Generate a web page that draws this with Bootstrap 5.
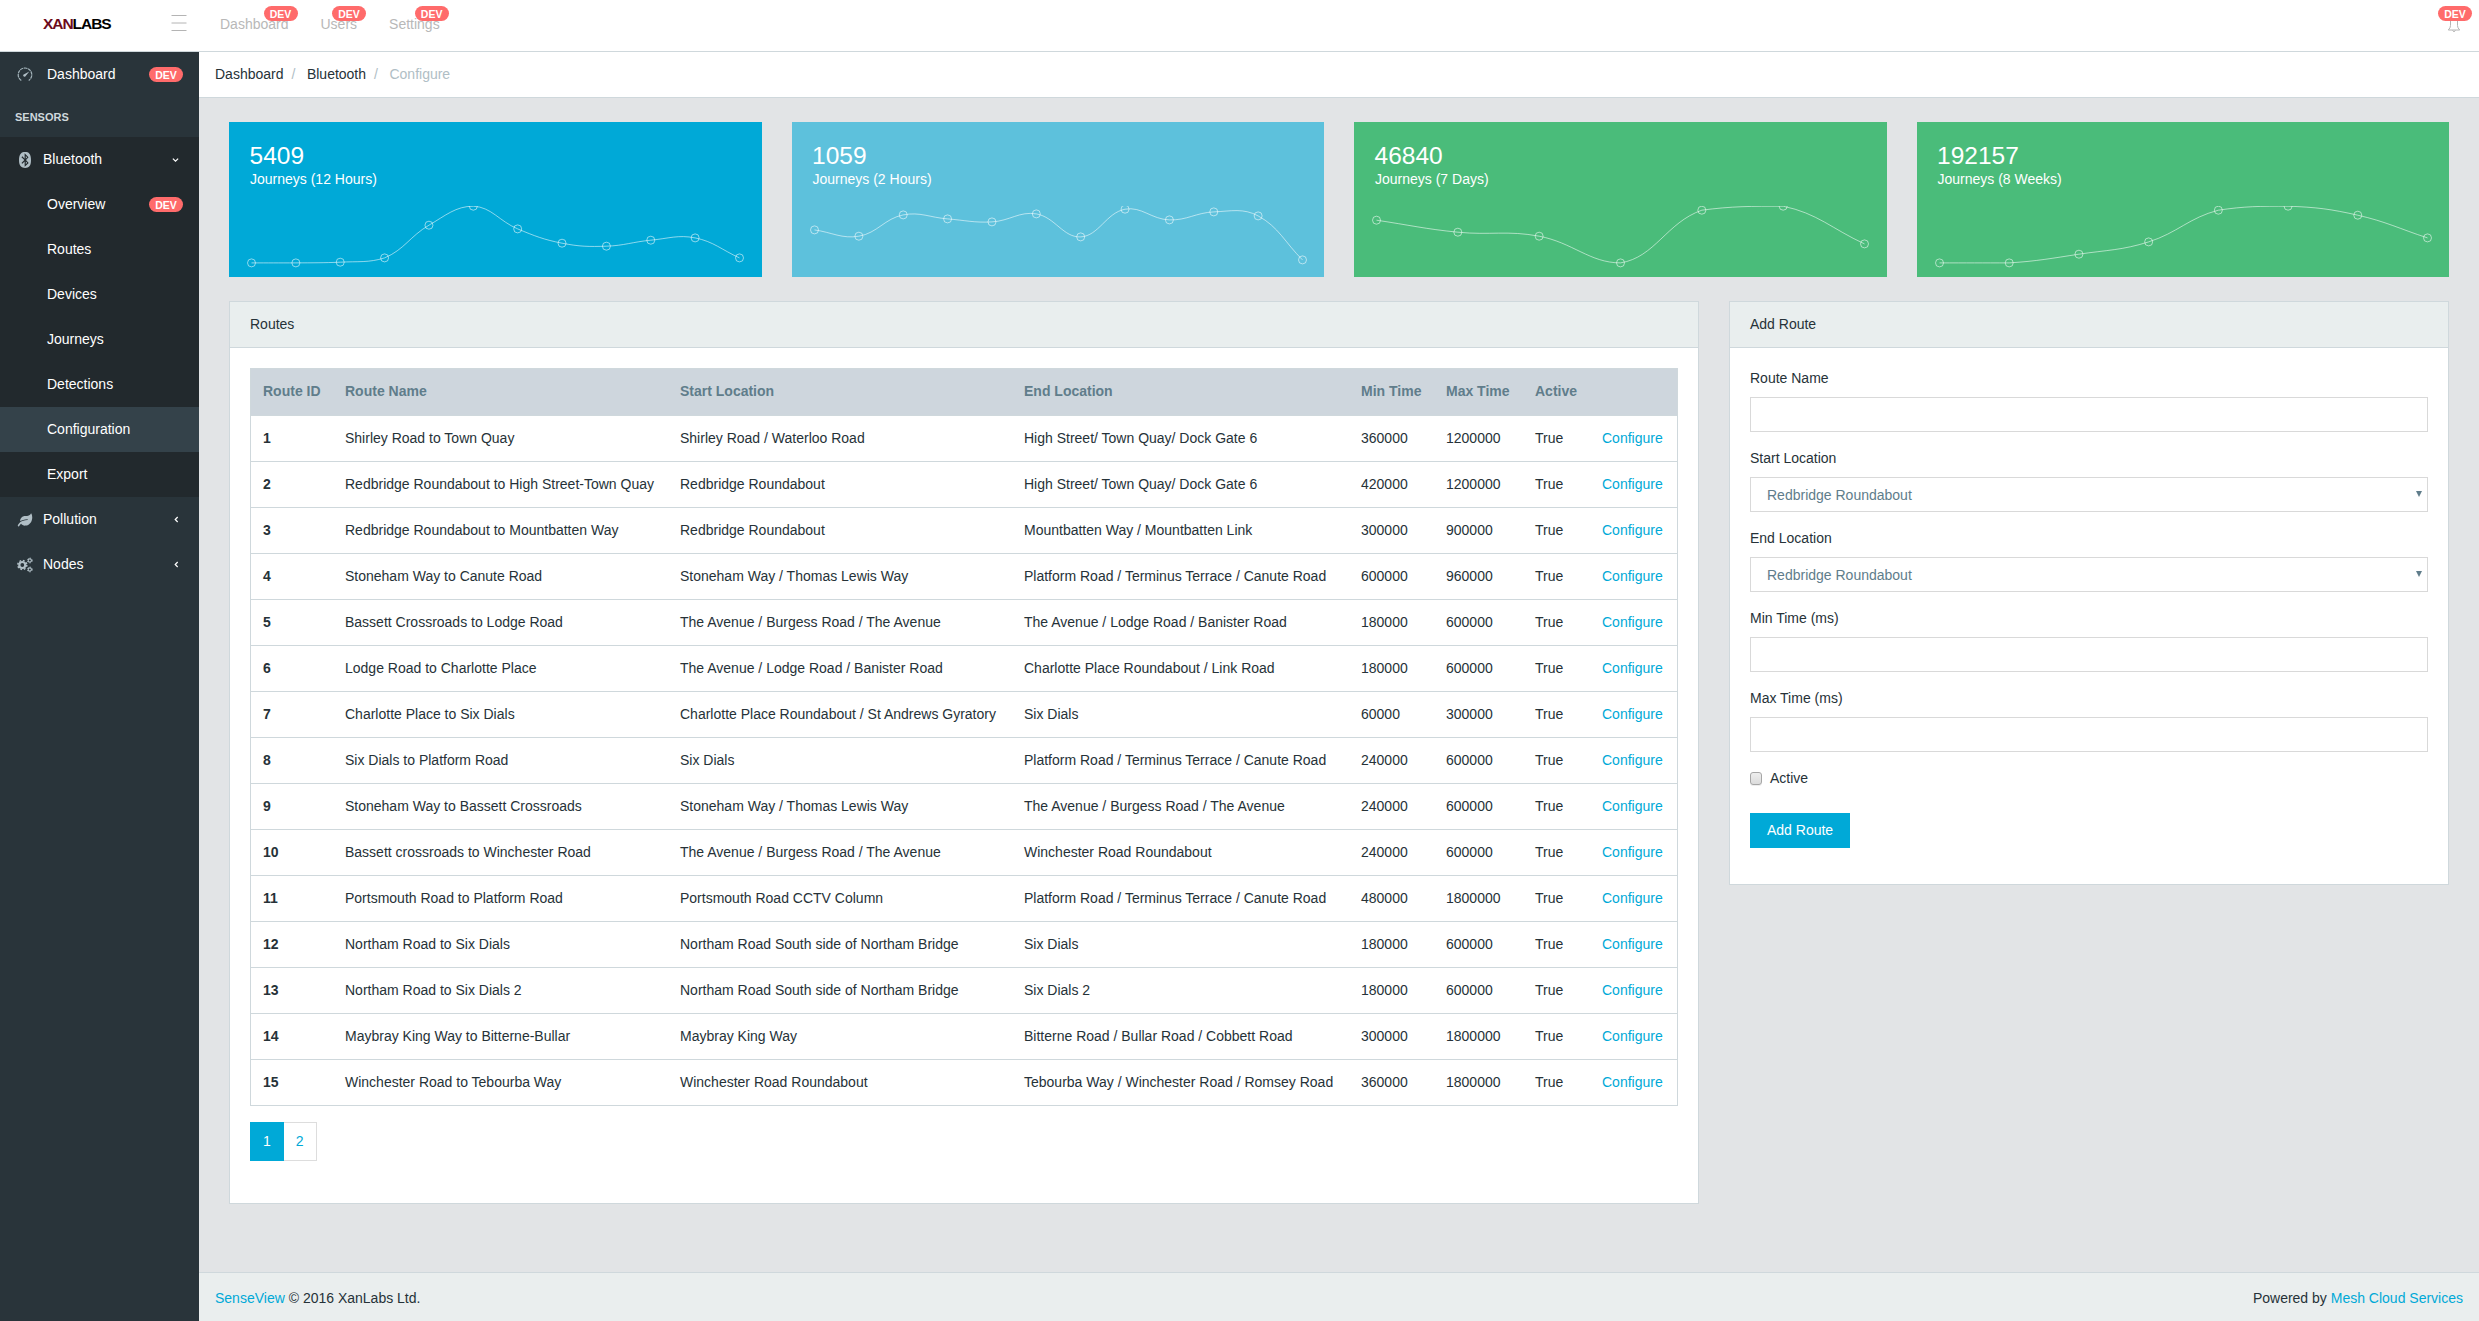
<!DOCTYPE html>
<html lang="en">
<head>
<meta charset="utf-8">
<meta name="viewport" content="width=device-width, initial-scale=1">
<title>SenseView - Configure</title>
<link href="https://cdn.jsdelivr.net/npm/bootstrap@5.3.0/dist/css/bootstrap.min.css" rel="stylesheet">
<style>
:root{--line:#cfd8dc;--brand:#00a9d7;--ink:#263238;--muted:#607d8b}
body{font:14px/1.5 "Liberation Sans",Arial,sans-serif;color:var(--ink);background:#e2e4e6}
a{color:var(--brand);text-decoration:none}
/* top bar */
.topbar{height:52px;background:#fff;border-bottom:1px solid var(--line)}
.brand-logo{width:155px;font-weight:700;font-size:15.5px;letter-spacing:-1.05px;color:#000;line-height:1;padding:16px 0 0 43px}
.brand-logo span{color:#6d0a1c}
.burger{width:16px;margin:15px 0 0 16px}
.top-links{gap:32px;margin:14px 0 0 33px}
.top-links a{color:#b8b8b8;position:relative}
.dev{background:#ff6b6b;font-size:10.5px;font-weight:700;height:15px;width:34px;padding:2.5px 0 0;line-height:11px;text-align:center;flex:none}
.top-links .dev{position:absolute;top:-8px;right:-9px}
.bell{position:relative;width:14px;height:16px;margin:17px 18px 0 0}
.bell svg{display:block}
.bell .dev{position:absolute;top:-11px;left:-9px}
/* sidebar */
.side{width:199px;background:#29343a;flex:none}
.side a{color:#fff;height:45px;padding:0 16px 0 47px}
.side .nav-icon{width:16px;height:16px;margin-left:-30px;margin-right:10px;fill:#b0bec5;flex:none}
.side .wide{padding-left:47px}
.side .wide .nav-icon{margin-right:14px;margin-top:-2px}
.side .chev{width:7px;height:7px;margin-right:4px;fill:none;stroke:#fff;stroke-width:1.4}
.side-title{height:40px;padding:12px 15px 0;font-size:11px;font-weight:700;color:#cfd8dc}
.side-open{background:#22292d}
.side a.now{background:#34424a}
/* page */
.crumbs{background:#fff;border-bottom:1px solid var(--line);padding:12px 16px;--bs-breadcrumb-divider-color:#b0bec5;--bs-breadcrumb-item-padding-x:8px;--bs-breadcrumb-item-active-color:#b0bec5}
.crumbs a{color:var(--ink)}
.crumbs .breadcrumb-item+.breadcrumb-item{padding-left:8px}
.crumbs .breadcrumb-item+.breadcrumb-item::before{padding-right:11.5px}
.page{padding:24px 30px 0}
.page .row{--bs-gutter-x:30px;margin-bottom:24px}
.tile,.panel{border-radius:0}
.tile{height:155px;color:#fff;border:0;padding:21px 0 0}
.tile h4{font-size:24.5px;line-height:26px;margin:0 20.5px;font-weight:400}
.tile p{margin:0 21px 16px}
.tile svg{display:block;width:100%;height:70px;overflow:hidden;fill:none;stroke:rgba(255,255,255,.55);stroke-width:1}
.c-blue{background:var(--brand)}.c-sky{background:#5dc1dc}.c-green{background:#4abc7a}
.panel{border:1px solid var(--line);color:inherit;--bs-card-inner-border-radius:0}
.panel .card-header{background:#e9eeee;border-bottom:1px solid var(--line);padding:12px 20px;border-radius:0}
.panel .card-body{padding:20px}
.routes{--bs-table-color:#263238;table-layout:fixed;border:1px solid var(--line);margin-bottom:16px;white-space:nowrap}
.routes th,.routes td{padding:12px 0 12px 12px;border-bottom:1px solid var(--line)}
.routes thead th{background:#ced6dd;color:var(--muted);padding-bottom:13px}
.pager{margin-bottom:22px;--bs-pagination-padding-x:12px;--bs-pagination-padding-y:8px;--bs-pagination-font-size:14px;--bs-pagination-border-radius:0;--bs-pagination-color:var(--brand);--bs-pagination-border-color:#ddd;--bs-pagination-active-bg:var(--brand);--bs-pagination-active-border-color:var(--brand)}
.form-label{margin-bottom:8px;display:block}
.field{margin-bottom:16px}
.field .form-control,.field .form-select{height:35px;border:1px solid #d9d9d9;border-radius:0;font-size:14px;color:var(--muted);padding:7px 16px 5px}
.field .form-select{background-image:url("data:image/svg+xml,%3Csvg xmlns='http://www.w3.org/2000/svg' viewBox='0 0 6 6'%3E%3Cpath fill='%23607d8b' d='M0 0h6L3 6z'/%3E%3C/svg%3E");background-size:6px 6px;background-position:right 5px top 13px}
.tick{appearance:none;width:12px;height:13px;margin:0 8px 0 0;border:1px solid #a6a6a6;border-radius:3px;background:linear-gradient(#eee,#dcdcdc);box-shadow:0 1px 0 #eee}
.btn-add{--bs-btn-color:#fff;--bs-btn-bg:var(--brand);--bs-btn-border-color:var(--brand);--bs-btn-border-radius:0;--bs-btn-font-size:14px;--bs-btn-padding-x:16px;--bs-btn-padding-y:6px;height:35px;margin-top:24px}
.foot{height:49px;background:#eaeeee;border-top:1px solid var(--line);padding:15px 16px 0}
</style>
<script src="https://cdn.jsdelivr.net/npm/bootstrap@5.3.0/dist/js/bootstrap.bundle.min.js"></script>
</head>
<body>
<div class="d-flex flex-column min-vh-100">
<header class="topbar d-flex align-items-start">
  <div class="brand-logo"><span>XAN</span>LABS</div>
  <svg class="burger" height="16" viewBox="0 0 16 16" stroke="#b4b4b4" stroke-width="1"><path d="M.5 .5h15M.5 8h15M.5 15.500h15"/></svg>
  <nav class="top-links d-flex">
    <a href="#">Dashboard<span class="badge rounded-pill dev">DEV</span></a>
    <a href="#">Users<span class="badge rounded-pill dev">DEV</span></a>
    <a href="#">Settings<span class="badge rounded-pill dev">DEV</span></a>
  </nav>
  <div class="bell ms-auto">
    <svg width="14" height="16" viewBox="0 0 14 16" fill="none" stroke="#b4b4b4" stroke-width="1"><path d="M3.500 3v5.500Q3.500 11 1.300 13h11.400Q10.500 11 10.500 8.500V3M5.500 13.500q1.500 2.500 3 0"/></svg>
    <span class="badge rounded-pill dev">DEV</span>
  </div>
</header>
<div class="d-flex flex-grow-1">
  <aside class="side">
    <nav class="d-flex flex-column">
      <a href="#" class="wide d-flex align-items-center"><svg class="nav-icon" viewBox="0 0 16 16"><path d="M4.300 14.500A6.800 6.800 0 1 1 11.700 14.500" fill="none" stroke="#a3b3ba" stroke-width="1.200" stroke-dasharray="3.400 .6"/><path d="M12.300 5.600 8.700 9.900A1.300 1.300 0 1 1 7.200 8.200z"/></svg>Dashboard<span class="badge rounded-pill dev ms-auto">DEV</span></a>
      <div class="side-title">SENSORS</div>
      <div class="side-open">
        <a href="#" class="d-flex align-items-center"><svg class="nav-icon" viewBox="-32 0 512 512"><path d="M292.600 171.100L249.700 214l-.3-86 43.200 43.100m-43.200 219.800l43.100-43.100-42.900-42.900-.2 86zM416 259.400C416 465 344.100 512 230.900 512S32 465 32 259.400 115.400 0 228.600 0 416 53.900 416 259.400zm-158.500 0l79.400-88.600L211.800 36.500v176.900L138 139.600l-27 26.900 92.700 93-92.700 93 26.900 26.900 73.800-73.800 2.300 170 127.400-127.500-83.900-88.700z"/></svg>Bluetooth<svg class="chev ms-auto" viewBox="0 0 8 8"><path d="M1 3l3 3 3-3"/></svg></a>
        <a href="#" class="d-flex align-items-center">Overview<span class="badge rounded-pill dev ms-auto">DEV</span></a>
        <a href="#" class="d-flex align-items-center">Routes</a>
        <a href="#" class="d-flex align-items-center">Devices</a>
        <a href="#" class="d-flex align-items-center">Journeys</a>
        <a href="#" class="d-flex align-items-center">Detections</a>
        <a href="#" class="d-flex align-items-center now">Configuration</a>
        <a href="#" class="d-flex align-items-center">Export</a>
      </div>
      <a href="#" class="d-flex align-items-center"><svg class="nav-icon" viewBox="-30 -20 636 552"><path d="M546.200 9.700c-5.600-12.500-21.600-13-28.300-1.200C486.900 62.400 431.400 96 368 96h-80C182 96 96 182 96 288c0 7 .8 13.700 1.500 20.500C161.300 262.800 253.400 224 384 224c8.800 0 16 7.200 16 16s-7.200 16-16 16C132.600 256 26 410.100 2.400 468c-6.600 16.300 1.200 34.900 17.500 41.600 16.400 6.800 35-1.100 41.800-17.300 1.500-3.600 20.900-47.900 71.900-90.600 32.400 43.900 94 85.800 174.900 77.200C465.500 467.500 576 326.700 576 154.300c0-50.200-10.800-102.200-29.800-144.600z"/></svg>Pollution<svg class="chev ms-auto" viewBox="0 0 8 8"><path d="M6.500 1.200 3.700 4l2.800 2.800"/></svg></a>
      <a href="#" class="d-flex align-items-center"><svg class="nav-icon" viewBox="0 0 16 16"><g fill="none" stroke="#b0bec5"><circle cx="5.300" cy="8" r="3" stroke-width="2.200"/><circle cx="5.300" cy="8" r="4.500" stroke-width="1.500" stroke-dasharray="1.770 1.770"/><circle cx="12.800" cy="3.500" r="1.600" stroke-width="1.100"/><circle cx="12.800" cy="3.500" r="2.400" stroke-width="1" stroke-dasharray="1.250 1.250"/><circle cx="12.800" cy="12.500" r="1.600" stroke-width="1.100"/><circle cx="12.800" cy="12.500" r="2.400" stroke-width="1" stroke-dasharray="1.250 1.250"/></g></svg>Nodes<svg class="chev ms-auto" viewBox="0 0 8 8"><path d="M6.500 1.200 3.700 4l2.800 2.800"/></svg></a>
    </nav>
  </aside>
  <div class="d-flex flex-column flex-grow-1">
    <ol class="breadcrumb crumbs mb-0">
      <li class="breadcrumb-item"><a href="#">Dashboard</a></li>
      <li class="breadcrumb-item"><a href="#">Bluetooth</a></li>
      <li class="breadcrumb-item active">Configure</li>
    </ol>
    <main class="page">
      <div class="row">
        <div class="col-3"><div class="card tile c-blue"><h4>5409</h4><p>Journeys (12 Hours)</p><svg data-y="56.700,56.700,56,51.700,19,0,22.700,37,40,34,31.700,51.700"></svg></div></div>
        <div class="col-3"><div class="card tile c-sky"><h4>1059</h4><p>Journeys (2 Hours)</p><svg data-y="23.700,30,8.700,12.700,15.700,7.700,30.700,3,13.700,5.700,9.700,53.700"></svg></div></div>
        <div class="col-3"><div class="card tile c-green"><h4>46840</h4><p>Journeys (7 Days)</p><svg data-y="14,26,30,56.700,4,0,37.700"></svg></div></div>
        <div class="col-3"><div class="card tile c-green"><h4>192157</h4><p>Journeys (8 Weeks)</p><svg data-y="56.700,56.700,48,35.700,4,0,9,31.700"></svg></div></div>
      </div>
      <div class="row align-items-start mb-0">
        <div class="col-8"><div class="card panel">
          <div class="card-header">Routes</div>
          <div class="card-body">
            <table class="table routes">
              <colgroup><col style="width:82.500px"><col style="width:335px"><col style="width:344px"><col style="width:337px"><col style="width:85px"><col style="width:89px"><col style="width:67px"><col></colgroup>
              <thead><tr><th>Route ID</th><th>Route Name</th><th>Start Location</th><th>End Location</th><th>Min Time</th><th>Max Time</th><th>Active</th><th></th></tr></thead>
              <tbody>
              <tr><th>1</th><td>Shirley Road to Town Quay</td><td>Shirley Road / Waterloo Road</td><td>High Street/ Town Quay/ Dock Gate 6</td><td>360000</td><td>1200000</td><td>True</td><td><a href="#">Configure</a></td></tr>
              <tr><th>2</th><td>Redbridge Roundabout to High Street-Town Quay</td><td>Redbridge Roundabout</td><td>High Street/ Town Quay/ Dock Gate 6</td><td>420000</td><td>1200000</td><td>True</td><td><a href="#">Configure</a></td></tr>
              <tr><th>3</th><td>Redbridge Roundabout to Mountbatten Way</td><td>Redbridge Roundabout</td><td>Mountbatten Way / Mountbatten Link</td><td>300000</td><td>900000</td><td>True</td><td><a href="#">Configure</a></td></tr>
              <tr><th>4</th><td>Stoneham Way to Canute Road</td><td>Stoneham Way / Thomas Lewis Way</td><td>Platform Road / Terminus Terrace / Canute Road</td><td>600000</td><td>960000</td><td>True</td><td><a href="#">Configure</a></td></tr>
              <tr><th>5</th><td>Bassett Crossroads to Lodge Road</td><td>The Avenue / Burgess Road / The Avenue</td><td>The Avenue / Lodge Road / Banister Road</td><td>180000</td><td>600000</td><td>True</td><td><a href="#">Configure</a></td></tr>
              <tr><th>6</th><td>Lodge Road to Charlotte Place</td><td>The Avenue / Lodge Road / Banister Road</td><td>Charlotte Place Roundabout / Link Road</td><td>180000</td><td>600000</td><td>True</td><td><a href="#">Configure</a></td></tr>
              <tr><th>7</th><td>Charlotte Place to Six Dials</td><td>Charlotte Place Roundabout / St Andrews Gyratory</td><td>Six Dials</td><td>60000</td><td>300000</td><td>True</td><td><a href="#">Configure</a></td></tr>
              <tr><th>8</th><td>Six Dials to Platform Road</td><td>Six Dials</td><td>Platform Road / Terminus Terrace / Canute Road</td><td>240000</td><td>600000</td><td>True</td><td><a href="#">Configure</a></td></tr>
              <tr><th>9</th><td>Stoneham Way to Bassett Crossroads</td><td>Stoneham Way / Thomas Lewis Way</td><td>The Avenue / Burgess Road / The Avenue</td><td>240000</td><td>600000</td><td>True</td><td><a href="#">Configure</a></td></tr>
              <tr><th>10</th><td>Bassett crossroads to Winchester Road</td><td>The Avenue / Burgess Road / The Avenue</td><td>Winchester Road Roundabout</td><td>240000</td><td>600000</td><td>True</td><td><a href="#">Configure</a></td></tr>
              <tr><th>11</th><td>Portsmouth Road to Platform Road</td><td>Portsmouth Road CCTV Column</td><td>Platform Road / Terminus Terrace / Canute Road</td><td>480000</td><td>1800000</td><td>True</td><td><a href="#">Configure</a></td></tr>
              <tr><th>12</th><td>Northam Road to Six Dials</td><td>Northam Road South side of Northam Bridge</td><td>Six Dials</td><td>180000</td><td>600000</td><td>True</td><td><a href="#">Configure</a></td></tr>
              <tr><th>13</th><td>Northam Road to Six Dials 2</td><td>Northam Road South side of Northam Bridge</td><td>Six Dials 2</td><td>180000</td><td>600000</td><td>True</td><td><a href="#">Configure</a></td></tr>
              <tr><th>14</th><td>Maybray King Way to Bitterne-Bullar</td><td>Maybray King Way</td><td>Bitterne Road / Bullar Road / Cobbett Road</td><td>300000</td><td>1800000</td><td>True</td><td><a href="#">Configure</a></td></tr>
              <tr><th>15</th><td>Winchester Road to Tebourba Way</td><td>Winchester Road Roundabout</td><td>Tebourba Way / Winchester Road / Romsey Road</td><td>360000</td><td>1800000</td><td>True</td><td><a href="#">Configure</a></td></tr>
              </tbody>
            </table>
            <ul class="pagination pager">
              <li class="page-item active"><a class="page-link" href="#">1</a></li>
              <li class="page-item"><a class="page-link" href="#">2</a></li>
            </ul>
          </div>
        </div></div>
        <div class="col-4"><div class="card panel">
          <div class="card-header">Add Route</div>
          <form class="card-body">
            <div class="field"><label class="form-label" for="f1">Route Name</label><input id="f1" class="form-control"></div>
            <div class="field"><label class="form-label" for="f2">Start Location</label><select id="f2" class="form-select"><option>Redbridge Roundabout</option></select></div>
            <div class="field"><label class="form-label" for="f3">End Location</label><select id="f3" class="form-select"><option>Redbridge Roundabout</option></select></div>
            <div class="field"><label class="form-label" for="f4">Min Time (ms)</label><input id="f4" class="form-control"></div>
            <div class="field"><label class="form-label" for="f5">Max Time (ms)</label><input id="f5" class="form-control"></div>
            <label class="d-flex align-items-center"><input type="checkbox" class="tick">Active</label>
            <button type="button" class="btn btn-add mb-3">Add Route</button>
          </form>
        </div></div>
      </div>
    </main>
    <footer class="foot d-flex justify-content-between mt-auto">
      <div><a href="#">SenseView</a> © 2016 XanLabs Ltd.</div>
      <div>Powered by <a href="#">Mesh Cloud Services</a></div>
    </footer>
  </div>
</div>
</div>
<script>
// Sparklines: smoothed line (tension 0.4, control points kept inside the plot) with ring markers
document.querySelectorAll('svg[data-y]').forEach(svg => {
  const ys = svg.dataset.y.split(',').map(Number), n = ys.length;
  const pts = ys.map((y, i) => ({x: 22.5 + i * 488 / (n - 1), y: y + .2}));
  const cap = y => Math.min(56.9, Math.max(.2, y));
  pts.forEach((p, i) => {
    const a = pts[i - 1] || p, b = pts[i + 1] || p;
    const d1 = Math.hypot(p.x - a.x, p.y - a.y), d2 = Math.hypot(b.x - p.x, b.y - p.y);
    const f1 = .4 * d1 / (d1 + d2), f2 = .4 * d2 / (d1 + d2);
    p.in = [p.x - f1 * (b.x - a.x), cap(p.y - f1 * (b.y - a.y))];
    p.out = [p.x + f2 * (b.x - a.x), cap(p.y + f2 * (b.y - a.y))];
  });
  let d = `M${pts[0].x} ${pts[0].y}`;
  for (let i = 1; i < n; i++) d += `C${pts[i - 1].out} ${pts[i].in} ${pts[i].x} ${pts[i].y}`;
  svg.innerHTML = `<path d="${d}"/>` + pts.map(p => `<circle cx="${p.x}" cy="${p.y}" r="4"/>`).join('');
});
</script>
</body>
</html>
